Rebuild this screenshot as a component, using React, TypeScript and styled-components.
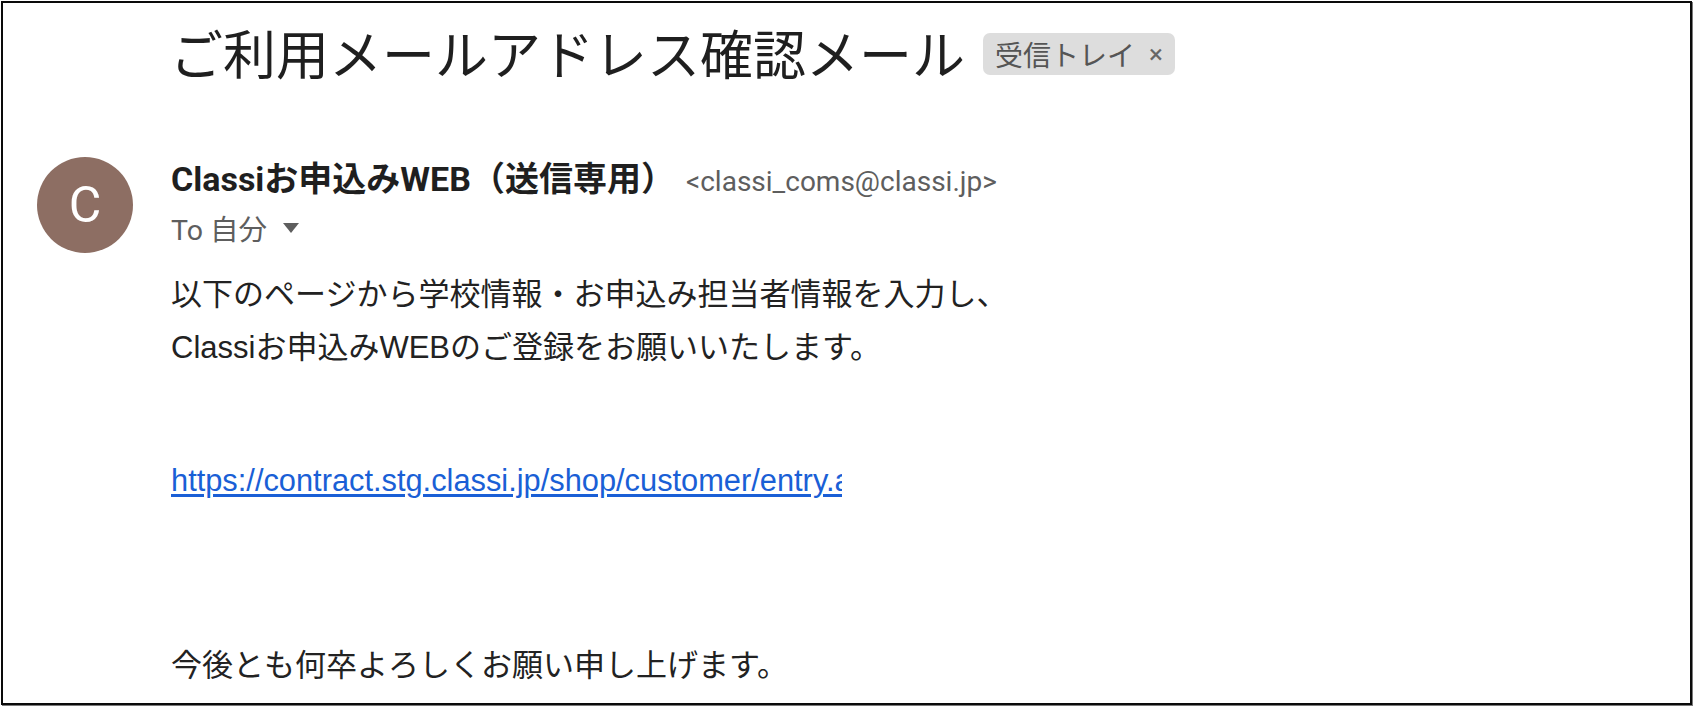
import React from "react";
import styled, { createGlobalStyle } from "styled-components";

const Global = createGlobalStyle`
  html, body { margin: 0; padding: 0; background: #fff; }
  body { font-family: "Liberation Sans", "Noto Sans CJK JP", sans-serif; }
  * { box-sizing: border-box; }
`;

const Page = styled.div`
  width: 1693px;
  height: 707px;
  padding: 1px 1px 2px 1px;
`;

const Frame = styled.div`
  height: 100%;
  border: 2px solid #0a0a0a;
  box-shadow: 1px 1px 0 #7a7a7a;
  background: #fff;
  overflow: hidden;
  display: flex;
  flex-direction: column;
  padding-top: 17px;
`;

const TitleRow = styled.div`
  display: flex;
  align-items: center;
  gap: 18px;
  padding-left: 167px;
`;

const Subject = styled.h1`
  margin: 0;
  font-family: "Noto Sans CJK JP", sans-serif;
  font-weight: 400;
  font-size: 53px;
  line-height: 64px;
  color: #1f1f1f;
  letter-spacing: 0;
`;

const Label = styled.span`
  display: inline-flex;
  align-items: center;
  gap: 14px;
  height: 42px;
  padding: 0 12px 0 12px;
  border-radius: 7px;
  background: #dddddd;
  color: #555;
  font-family: "Noto Sans CJK JP", sans-serif;
  font-size: 28px;
  line-height: 42px;
  margin-top: 4px;
`;

const LabelClose = styled.span`
  font-family: "Roboto", sans-serif;
  font-size: 26px;
  color: #666;
`;

const Message = styled.div`
  display: flex;
  align-items: flex-start;
  gap: 38px;
  padding-left: 34px;
  margin-top: 73px;
`;

const Avatar = styled.div`
  flex: none;
  width: 96px;
  height: 96px;
  border-radius: 50%;
  background: #8d6e63;
  color: #fff;
  display: flex;
  align-items: center;
  justify-content: center;
  font-family: "Roboto", sans-serif;
  font-size: 50px;
  margin-top: 0;
`;

const Content = styled.div`
  display: flex;
  flex-direction: column;
  min-width: 0;
`;

const SenderLine = styled.div`
  display: flex;
  align-items: baseline;
  gap: 11px;
  height: 44px;
  line-height: 44px;
  white-space: nowrap;
`;

const SenderName = styled.span`
  font-family: "Roboto", "Noto Sans CJK JP", sans-serif;
  font-weight: 700;
  font-size: 34px;
  color: #1f1f1f;
`;

const SenderEmail = styled.span`
  font-family: "Roboto", sans-serif;
  font-size: 28px;
  color: #5e5e5e;
`;

const ToLine = styled.div`
  display: flex;
  align-items: center;
  gap: 10px;
  margin-top: 6px;
  height: 40px;
  font-family: "Roboto", "Noto Sans CJK JP", sans-serif;
  font-size: 28.5px;
  color: #5e5e5e;
`;

const Caret = styled.svg`
  width: 20px;
  height: 12px;
  margin-left: 4px;
  margin-top: 2px;
`;

const BodyLine = styled.div<{ $gap: number }>`
  margin-top: ${(p) => p.$gap}px;
  font-family: "Liberation Sans", "Noto Sans CJK JP", sans-serif;
  font-size: 31px;
  line-height: 53px;
  color: #222;
  white-space: nowrap;
`;

const LinkClip = styled.div`
  margin-top: 80px;
  width: 671px;
  overflow: hidden;
  white-space: nowrap;
  line-height: 53px;
`;

const Link = styled.a`
  font-family: "Liberation Sans", sans-serif;
  font-size: 30.8px;
  color: #1a5fd6;
  text-decoration: underline;
  text-underline-offset: 3px;
`;

export default function App() {
  return (
    <>
      <Global />
      <Page>
        <Frame>
          <TitleRow>
            <Subject>ご利用メールアドレス確認メール</Subject>
            <Label>
              受信トレイ<LabelClose>×</LabelClose>
            </Label>
          </TitleRow>
          <Message>
            <Avatar>C</Avatar>
            <Content>
              <SenderLine>
                <SenderName>Classiお申込みWEB（送信専用）</SenderName>
                <SenderEmail>&lt;classi_coms@classi.jp&gt;</SenderEmail>
              </SenderLine>
              <ToLine>
                To 自分
                <Caret viewBox="0 0 20 12">
                  <path d="M2 1 L18 1 L10 11 Z" fill="#5e5e5e" />
                </Caret>
              </ToLine>
              <BodyLine $gap={21}>以下のページから学校情報・お申込み担当者情報を入力し、</BodyLine>
              <BodyLine $gap={0}>Classiお申込みWEBのご登録をお願いいたします。</BodyLine>
              <LinkClip>
                <Link href="#">https://contract.stg.classi.jp/shop/customer/entry.aspx?key=0000</Link>
              </LinkClip>
              <BodyLine $gap={127}>今後とも何卒よろしくお願い申し上げます。</BodyLine>
            </Content>
          </Message>
        </Frame>
      </Page>
    </>
  );
}
